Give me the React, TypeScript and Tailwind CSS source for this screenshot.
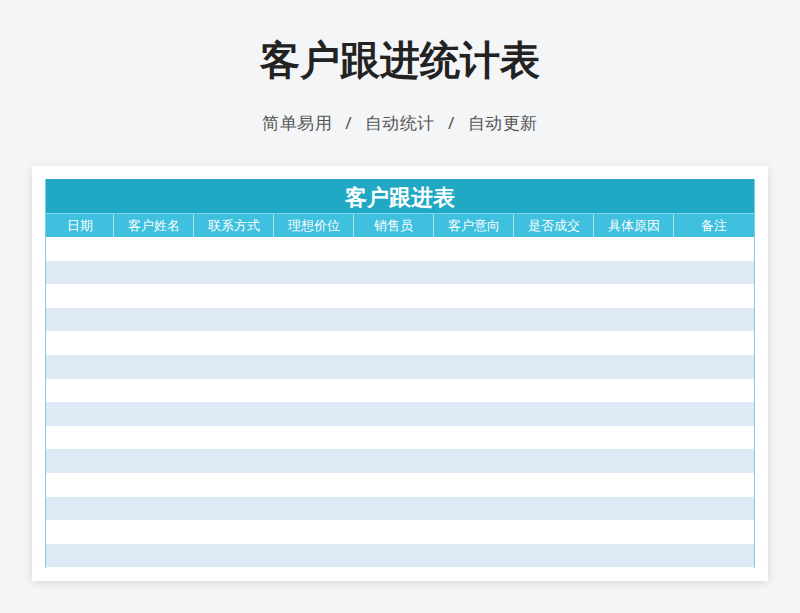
const cols = ['日期', '客户姓名', '联系方式', '理想价位', '销售员', '客户意向', '是否成交', '具体原因', '备注']
const widths = ['w-[68px]', 'w-[80px]', 'w-[80px]', 'w-[80px]', 'w-[80px]', 'w-[80px]', 'w-[80px]', 'w-[80px]', 'flex-1']
const rows = Array.from({ length: 14 }, (_, i) => i)

export default function App() {
  return (
    <div className="w-[800px] h-[613px] bg-[#f4f5f7] flex flex-col items-center font-['Noto_Sans_CJK_SC',sans-serif]">
      <h1 className="mt-[33px] text-[40px] leading-[52px] font-bold text-[#222]">客户跟进统计表</h1>
      <p className="mt-[26px] text-[17px] leading-[24px] text-[#555] tracking-[0.5px] [word-spacing:8px]">简单易用 / 自动统计 / 自动更新</p>
      <div className="mt-[31px] w-[736px] h-[415px] bg-white shadow-[0_2px_8px_rgba(0,0,0,0.12)] px-[13px] pt-[13px]">
        <div className="border-x border-[#7fcfe0] h-[389px] flex flex-col">
          <div className="h-[34px] bg-[#20a8c4] text-white text-[22px] leading-[34px] text-center font-bold">客户跟进表</div>
          <div className="h-[24px] bg-[#3ec0de] flex border-t border-[#7fd6ea]">
            {cols.map((c, i) => (
              <div
                key={c}
                className={`${widths[i]} ${i < cols.length - 1 ? 'border-r border-[#a9e3f0]' : ''} text-white text-[13px] leading-[23px] text-center font-medium`}
              >
                {c}
              </div>
            ))}
          </div>
          {rows.map((r) => (
            <div key={r} className={`h-[23.6px] ${r % 2 ? 'bg-[#ddeaf5]' : 'bg-white'}`} />
          ))}
        </div>
      </div>
    </div>
  )
}
